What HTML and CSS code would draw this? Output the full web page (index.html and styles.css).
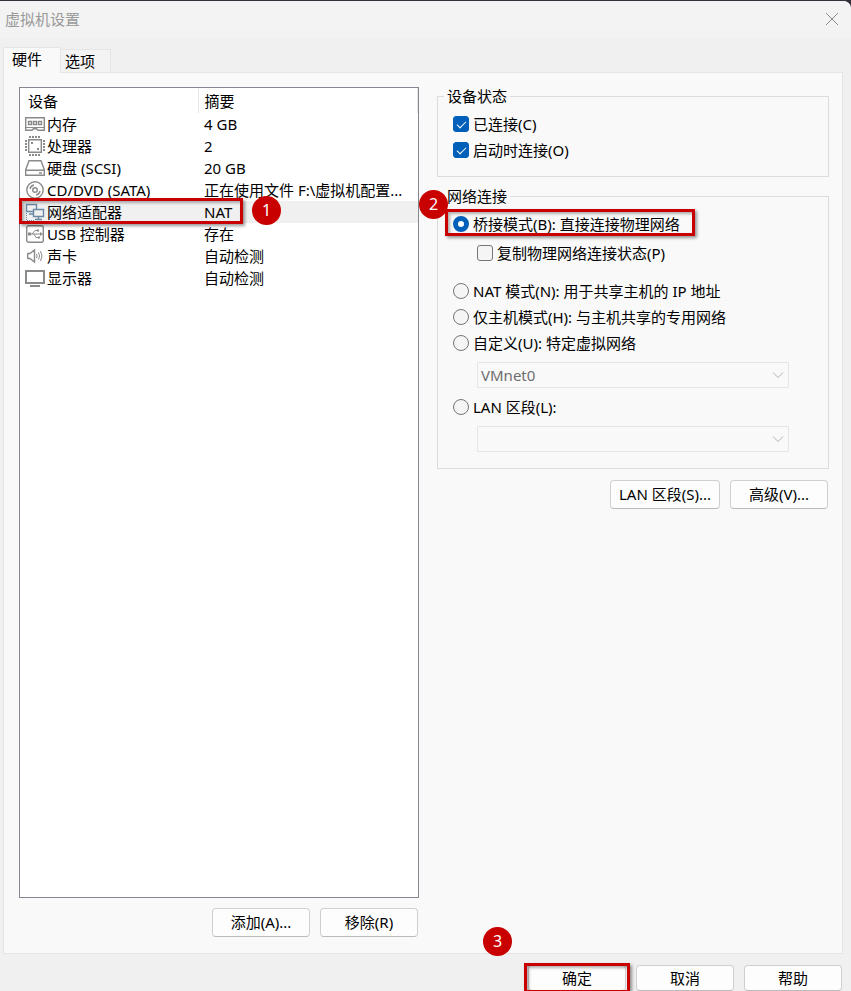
FILE: index.html
```html
<!DOCTYPE html>
<html lang="zh-CN">
<head>
  <meta charset="UTF-8">
  <meta name="viewport" content="width=device-width, initial-scale=1.0">
  <title>虚拟机设置</title>
  <link rel="stylesheet" href="styles.css">
</head>
<body>
  <div class="dialog">
    <header class="titlebar">
      <h1>虚拟机设置</h1>
      <button type="button" class="close" aria-label="关闭">
        <svg width="14" height="14" viewBox="0 0 14 14"><path d="M1 1l12 12M13 1L1 13"/></svg>
      </button>
    </header>

    <nav class="tabs">
      <button type="button" class="tab active">硬件</button>
      <button type="button" class="tab">选项</button>
    </nav>

    <main class="panel">
      <section class="left">
        <div class="device-list">
          <table>
            <thead>
              <tr><th class="col-device">设备</th><th>摘要</th></tr>
            </thead>
            <tbody>
              <tr>
                <td><svg class="icon" viewBox="0 0 20 20"><path d="M.7 3.700h18.600v12.600H13l-1.500-1.500h-3L7 16.300H.7z"/><path d="M1 13.500h18" stroke-width="1"/><path d="M3.500 7.500h3v3h-3zM8.500 7.500h3v3h-3zM13.500 7.500h3v3h-3z"/></svg>内存</td>
                <td>4 GB</td>
              </tr>
              <tr>
                <td><svg class="icon" viewBox="0 0 20 20"><path d="M3.700 3.700h12.600v12.600H3.700z"/><path d="M4 1h12M4 19h12M1 4v12M19 4v12" stroke-width="2" stroke-dasharray="2 1"/><path class="fill" d="M6 6h2v2H6zM12 12h2v2h-2z"/></svg>处理器</td>
                <td>2</td>
              </tr>
              <tr>
                <td><svg class="icon" viewBox="0 0 20 20"><path d="M4 2.700h12l3.300 9v5.600H.7v-5.600zM.7 12.300h18.600"/><path d="M14 15h3"/></svg>硬盘 (SCSI)</td>
                <td>20 GB</td>
              </tr>
              <tr>
                <td><svg class="icon" viewBox="0 0 20 20"><circle cx="10" cy="10" r="8.200"/><circle cx="10" cy="10" r="2.300"/><path d="M5 9a5 5 0 0 1 4-4M15 11a5 5 0 0 1-4 4"/></svg>CD/DVD (SATA)</td>
                <td>正在使用文件 F:\虚拟机配置...</td>
              </tr>
              <tr class="selected">
                <td class="marked"><svg class="icon net" viewBox="0 0 20 20"><path class="dash" d="M1.500 11v7.500H10"/><path d="M1.500 2.500h10v7h-10zM4 12h4"/><path class="screen" d="M8.500 7.500h10v7h-10z"/><path d="M13.500 15v2.500M10 17.500h7"/></svg>网络适配器<span class="frame frame-device"></span><span class="badge badge-device">1</span></td>
                <td>NAT</td>
              </tr>
              <tr>
                <td><svg class="icon" viewBox="0 0 20 20"><rect x="1.700" y="1.700" width="16.600" height="16.600" rx="2"/><path d="M5 10h11M7 10l3-3.500h2M9 10l2 3.500h2" stroke-width="1"/><path class="fill" d="M3 8.500h3v3H3zM12 5.500h2v2h-2zM13 12.500h2v2h-2zM15 8l3 2-3 2z"/></svg>USB 控制器</td>
                <td>存在</td>
              </tr>
              <tr>
                <td><svg class="icon" viewBox="0 0 20 20"><path d="M2.700 7.500H5L9.500 4v12L5 12.500H2.700z"/><path d="M11.500 8q1.200 2 0 4M13.500 6.500q2 3.500 0 7M15.500 5q3 5 0 10" stroke-width="1"/></svg>声卡</td>
                <td>自动检测</td>
              </tr>
              <tr>
                <td><svg class="icon" viewBox="0 0 20 20"><path d="M1 3h18v12H1z" stroke-width="2"/><path d="M5 18h10" stroke-width="2"/></svg>显示器</td>
                <td>自动检测</td>
              </tr>
            </tbody>
          </table>
        </div>
        <div class="buttons">
          <button type="button" class="btn">添加(A)...</button>
          <button type="button" class="btn">移除(R)</button>
        </div>
      </section>

      <section class="right">
        <fieldset class="group">
          <legend>设备状态</legend>
          <label class="option"><input type="checkbox" checked>已连接(C)</label>
          <label class="option"><input type="checkbox" checked>启动时连接(O)</label>
        </fieldset>

        <fieldset class="group network">
          <legend>网络连接</legend>
          <div class="marked">
            <label class="option"><input type="radio" name="net" checked>桥接模式(B): 直接连接物理网络</label>
            <span class="frame frame-bridge"></span>
            <span class="badge badge-bridge">2</span>
          </div>
          <label class="option sub"><input type="checkbox">复制物理网络连接状态(P)</label>
          <label class="option"><input type="radio" name="net">NAT 模式(N): 用于共享主机的 IP 地址</label>
          <label class="option"><input type="radio" name="net">仅主机模式(H): 与主机共享的专用网络</label>
          <label class="option"><input type="radio" name="net">自定义(U): 特定虚拟网络</label>
          <div class="select">
            <select aria-label="特定虚拟网络" disabled><option>VMnet0</option></select>
            <svg width="12" height="8" viewBox="0 0 12 8"><path d="M1 1.500l5 5 5-5"/></svg>
          </div>
          <label class="option"><input type="radio" name="net">LAN 区段(L):</label>
          <div class="select">
            <select aria-label="LAN 区段" disabled><option></option></select>
            <svg width="12" height="8" viewBox="0 0 12 8"><path d="M1 1.500l5 5 5-5"/></svg>
          </div>
        </fieldset>

        <div class="buttons">
          <button type="button" class="btn wide">LAN 区段(S)...</button>
          <button type="button" class="btn">高级(V)...</button>
        </div>
      </section>
    </main>

    <footer class="footer">
      <div class="marked">
        <button type="button" class="btn">确定</button>
        <span class="frame frame-ok"></span>
        <span class="badge badge-ok">3</span>
      </div>
      <button type="button" class="btn">取消</button>
      <button type="button" class="btn">帮助</button>
    </footer>
  </div>
</body>
</html>
```
FILE: styles.css
```css
* {
  box-sizing: border-box;
}

body {
  margin: 0;
  background-color: #34303a;
  color: #000;
  font-family: "Noto Sans", "Noto Sans CJK SC", sans-serif;
  font-size: 15px;
  line-height: 20px;
}

button,
select {
  font: inherit;
  color: inherit;
}

.dialog {
  display: flex;
  flex-direction: column;
  height: 100vh;
  min-height: 700px;
  overflow: hidden;
  border-top: 1px solid #34303a;
  border-radius: 0 8px 0 0;
  background-color: #f0f0f0;
}

/* title bar */
.titlebar {
  display: flex;
  align-items: center;
  justify-content: space-between;
  height: 37px;
  padding: 0 12px 2px 5px;
  background-color: #f3f3f3;
}

.titlebar h1 {
  margin: 0;
  color: #999;
  font-size: 15px;
  font-weight: normal;
}

.close {
  display: flex;
  padding: 0;
  border: 0;
  background: none;
}

.close path {
  fill: none;
  stroke: #8a8a8a;
}

/* tabs */
.tabs {
  display: flex;
  align-items: flex-end;
  margin: 9px 0 0 3px;
}

.tab {
  height: 23px;
  padding: 0 15px 1px 4px;
  border: 1px solid #e5e5e5;
  border-width: 1px 1px 0 0;
  background-color: #f3f3f3;
}

.tab.active {
  position: relative;
  height: 26px;
  margin-bottom: -1px;
  padding: 0 18px 4px 8px;
  border-width: 1px 1px 0 1px;
  background-color: #f9f9f9;
}

.panel {
  flex: 1;
  display: grid;
  grid-template-columns: 400fr 392fr;
  gap: 18px;
  min-height: 0;
  margin: 0 8px 0 3px;
  padding: 14px 13px 16px 15px;
  border: 1px solid #e5e5e5;
  background-color: #f9f9f9;
}

.left {
  display: flex;
  flex-direction: column;
  min-width: 0;
}

/* device list */
.device-list {
  flex: 1;
  border: 1px solid #828790;
  background-color: #fff;
}

table {
  width: 100%;
  border-collapse: collapse;
  table-layout: fixed;
}

th {
  height: 25px;
  padding: 0 6px 0 8px;
  border-right: 1px solid #e5e5e5;
  font-weight: normal;
  text-align: left;
}

.col-device {
  width: 178px;
}

td {
  height: 22px;
  padding: 0 4px 0 5px;
  white-space: nowrap;
}

th + th,
td + td {
  padding-left: 6px;
}

.selected {
  background-color: #f0f0f0;
}

.icon {
  width: 20px;
  height: 20px;
  margin: -2px 2px 0 0;
  vertical-align: middle;
  fill: none;
  stroke: #8a8a8a;
  stroke-width: 1.4;
}

.icon .fill {
  fill: #8a8a8a;
  stroke: none;
}

.icon.net {
  stroke: #6888a5;
}

.icon .screen {
  fill: #f0f0f0;
}

.icon .dash {
  stroke-width: 1;
  stroke-dasharray: 1 1;
}

/* buttons */
.buttons {
  display: flex;
  justify-content: flex-end;
  gap: 10px;
  margin: 10px 1px 0 0;
}

.right .buttons {
  margin: 11px 1px 0 0;
}

.btn {
  width: 98px;
  height: 29px;
  padding: 0 0 2px;
  border: 1px solid #d0d0d0;
  border-bottom-color: #bbb;
  border-radius: 4px;
  background-color: #fdfdfd;
}

.btn.wide {
  width: 110px;
}

/* groups on the right side */
.group {
  min-width: 0;
  margin: 0 0 10px;
  padding: 6px 39px 13px 15px;
  border: 1px solid #dcdcdc;
}

.group.network {
  margin-bottom: 0;
  padding-bottom: 10px;
}

legend {
  margin-left: -9px;
  padding: 0 3px;
  line-height: 18px;
}

.option {
  display: flex;
  align-items: center;
  gap: 4px;
  height: 26px;
  white-space: nowrap;
}

.option.sub {
  margin: 3px 0 12px 24px;
}

.option input {
  appearance: none;
  display: flex;
  align-items: center;
  justify-content: center;
  flex: none;
  width: 16px;
  height: 16px;
  margin: 0;
  border: 1px solid #767676;
  border-radius: 3px;
  background-color: #f5f5f5;
}

.option input[type="radio"] {
  border-radius: 50%;
}

.option input[type="checkbox"]:checked {
  border-color: #005fb8;
  background-color: #005fb8;
}

.option input[type="checkbox"]:checked::before {
  content: "";
  width: 8px;
  height: 4px;
  margin-bottom: 2px;
  border: solid #fff;
  border-width: 0 0 1px 1px;
  transform: rotate(-45deg);
}

.option input[type="radio"]:checked {
  border: 5px solid #005fb8;
  background-color: #fff;
}

.select {
  position: relative;
  margin: 6px 0 6px 24px;
}

.select select {
  appearance: none;
  display: block;
  width: 100%;
  height: 26px;
  padding: 0 24px 0 3px;
  border: 1px solid #e5e5e5;
  border-radius: 1px;
  background-color: #f9f9f9;
  color: #6d6d6d;
  opacity: 1;
}

.select svg {
  position: absolute;
  top: 9px;
  right: 5px;
  fill: none;
  stroke: #b0b0b0;
}

/* footer */
.footer {
  display: flex;
  justify-content: flex-end;
  gap: 10px;
  height: 37px;
  padding: 11px 9px 0 0;
}

.footer .btn {
  display: block;
  height: 26px;
  padding: 0;
}

/* numbered steps */
.marked {
  position: relative;
}

.frame {
  position: absolute;
  border: 3px solid #c80000;
  box-shadow: 2px 2px 3px rgba(0, 0, 0, 0.4), inset 2px 2px 3px rgba(0, 0, 0, 0.3);
  pointer-events: none;
}

.badge {
  position: absolute;
  z-index: 1;
  width: 29px;
  height: 29px;
  border-radius: 50%;
  background-color: #c80000;
  color: #fff;
  font-size: 16px;
  line-height: 28px;
  text-align: center;
}

.frame-device {
  top: -3px;
  left: -1px;
  width: 224px;
  height: 26px;
}

.badge-device {
  top: -5px;
  left: 232px;
}

.frame-bridge {
  top: -2px;
  left: -8px;
  width: 250px;
  height: 27px;
}

.badge-bridge {
  top: -21px;
  left: -34px;
}

.frame-ok {
  top: -2px;
  left: -4px;
  width: 106px;
  height: 30px;
}

.badge-ok {
  top: -38px;
  left: -45px;
}
```
